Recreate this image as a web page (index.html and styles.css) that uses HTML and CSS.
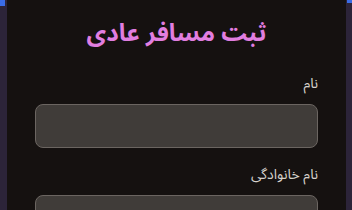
FILE: index.html
```html
<!DOCTYPE html>
<html lang="fa" dir="rtl">
<head>
<meta charset="utf-8">
<link rel="stylesheet" href="styles.css">
</head>
<body>
<span class="corner corner-left"></span>
<span class="corner corner-right"></span>
<main class="card">
  <h1 class="title">ثبت مسافر عادی</h1>
  <form class="form">
    <label class="field">
      <span class="label">نام</span>
      <input class="input" type="text">
    </label>
    <label class="field">
      <span class="label">نام خانوادگی</span>
      <input class="input" type="text">
    </label>
  </form>
</main>
</body>
</html>
```
FILE: styles.css
```css
html, body {
  margin: 0;
  padding: 0;
  height: 100%;
  overflow: hidden;
}
body {
  background: #2c2439;
  font-family: "Noto Sans Arabic", "Noto Sans", "DejaVu Sans", sans-serif;
  display: flex;
  justify-content: center;
  position: relative;
}
.corner {
  position: absolute;
  top: 0;
  background: #3a6ce6;
}
.corner-left { left: 0; width: 5px; height: 6px; }
.corner-right { right: 0; width: 5px; height: 3px; }
.card {
  width: 339px;
  margin-left: 1px;
  background: #151110;
  box-sizing: border-box;
  padding: 17px 28px 0;
  min-height: 100%;
}
.title {
  margin: 0;
  text-align: center;
  color: #e17ee0;
  font-size: 24px;
  font-weight: 700;
  line-height: 34px;
}
.form {
  display: flex;
  flex-direction: column;
  gap: 17px;
  margin-top: 23px;
}
.field {
  display: flex;
  flex-direction: column;
  gap: 10px;
}
.label {
  color: #d6d1cc;
  font-size: 14px;
  line-height: 20px;
}
.input {
  height: 44px;
  box-sizing: border-box;
  border: 1px solid #6b6561;
  border-radius: 8px;
  background: #403c39;
  margin: 0;
  padding: 0 12px;
}
```
